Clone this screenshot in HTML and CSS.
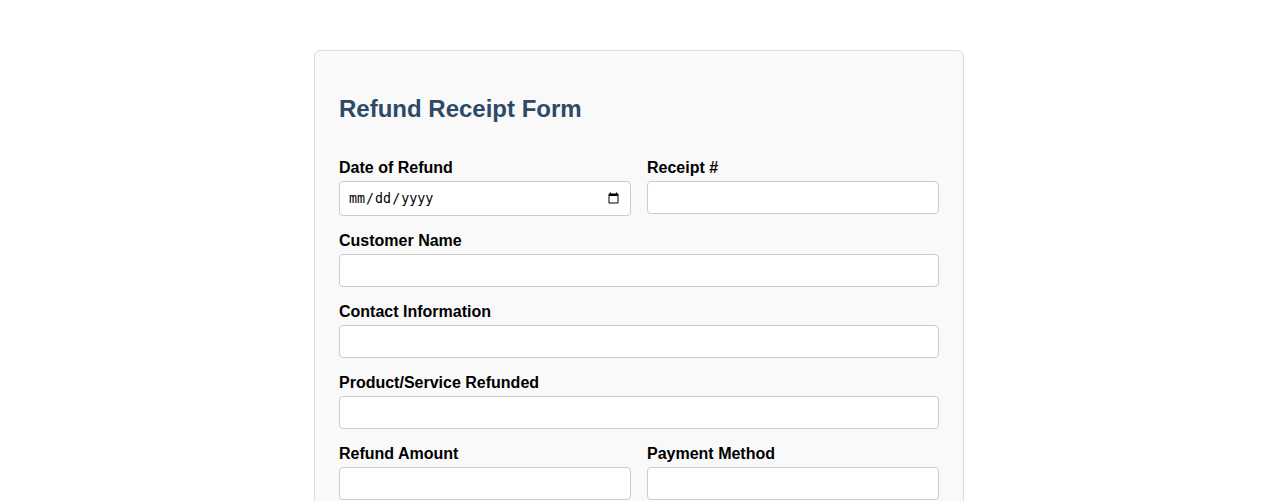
FILE: index.html
```html
<!DOCTYPE html>
<html lang="en">
<head>
    <meta charset="UTF-8">
    <meta name="viewport" content="width=device-width, initial-scale=1.0">
    <title>Refund Receipt Form</title>
    <link rel="stylesheet" href="styles.css">
</head>
<body>

<div class="form-card">
    <h2>Refund Receipt Form</h2>

    <form class="receipt-form">
        <div class="form-row">
            <div class="form-group">
                <label for="refund-date">Date of Refund</label>
                <input type="date" id="refund-date">
            </div>
            <div class="form-group">
                <label for="receipt-no">Receipt #</label>
                <input type="text" id="receipt-no">
            </div>
        </div>

        <div class="form-group">
            <label for="customer-name">Customer Name</label>
            <input type="text" id="customer-name">
        </div>

        <div class="form-group">
            <label for="contact-info">Contact Information</label>
            <input type="text" id="contact-info">
        </div>

        <div class="form-group">
            <label for="product">Product/Service Refunded</label>
            <input type="text" id="product">
        </div>

        <div class="form-row">
            <div class="form-group">
                <label for="amount">Refund Amount</label>
                <input type="text" id="amount">
            </div>
            <div class="form-group">
                <label for="payment-method">Payment Method</label>
                <input type="text" id="payment-method">
            </div>
        </div>

        <div class="form-group">
            <label for="reason">Reason for Refund</label>
            <input type="text" id="reason">
        </div>
    </form>
</div>

</body>
</html>
```

FILE: styles.css
```css
body {
    font-family: 'Liberation Sans', Arial, sans-serif;
    margin: 0;
    padding: 0;
    background-color: #fff;
    color: #000;
}
.form-card {
    max-width: 600px;
    margin: 50px auto;
    padding: 24px;
    background-color: #f9f9f9;
    border: 1px solid #ddd;
    border-radius: 6px;
}
.form-card h2 {
    color: #2c4a68;
    font-size: 24px;
    margin: 20px 0 36px;
}
.form-row {
    display: grid;
    grid-template-columns: 1fr 1fr;
    gap: 16px;
}
.form-group {
    margin-bottom: 16px;
}
.form-group label {
    display: block;
    font-weight: bold;
    font-size: 16px;
    margin-bottom: 4px;
}
.form-group input {
    display: block;
    width: 100%;
    box-sizing: border-box;
    padding: 8px;
    border: 1px solid #ccc;
    border-radius: 4px;
    background-color: #fff;
}
```
